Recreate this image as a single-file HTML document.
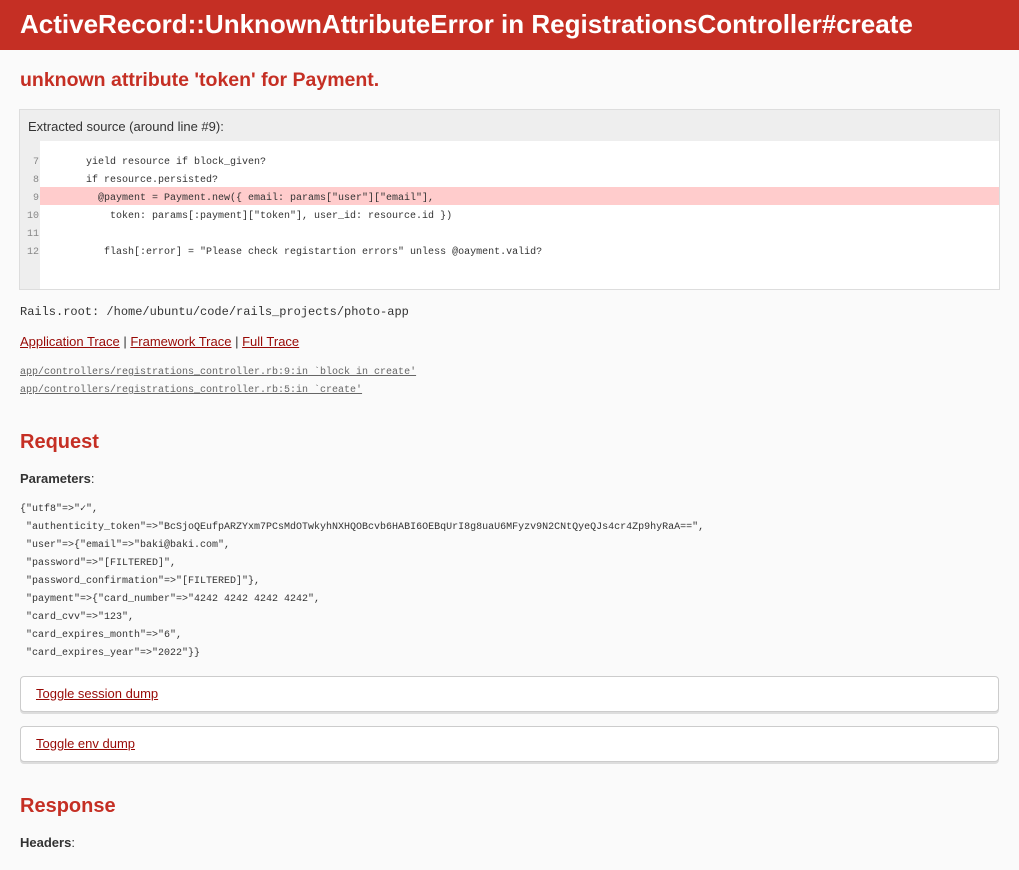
<!DOCTYPE html>
<html><head><meta charset="utf-8"><style>
body{margin:0;background:#fafafa;font-family:"Liberation Sans",Arial,sans-serif;color:#333;width:1019px;height:870px;overflow:hidden;position:relative}
.a{position:absolute;white-space:pre}
header{position:absolute;left:0;top:0;width:1019px;height:50px;background:#c52f24}
h1{position:absolute;left:20px;top:9px;margin:0;color:#fff;font-size:26px;font-weight:bold;white-space:nowrap}
.red{color:#c52f24;font-weight:bold}
.mono{font-family:"Liberation Mono",monospace;font-size:10px;color:#333}
a{color:#980905;text-decoration:underline}
.box{position:absolute;left:20px;width:977px;background:#fff;border:1px solid #ccc;border-radius:4px;box-shadow:0 2px 0 #ddd}
</style></head><body>
<header><h1>ActiveRecord::UnknownAttributeError in RegistrationsController#create</h1></header>
<div class="a red" style="left:20px;top:69px;font-size:19.5px">unknown attribute 'token' for Payment.</div>
<div style="position:absolute;left:19px;top:109px;width:979px;height:179px;border:1px solid #ddd;background:#eee">
 <div class="a" style="left:8px;top:9px;font-size:13px;color:#333">Extracted source (around line #9):</div>
 <div style="position:absolute;left:20px;top:31px;width:959px;height:148px;background:#fff"></div>
 <div style="position:absolute;left:20px;top:77px;width:959px;height:18px;background:#fcc"></div>
 <div class="a mono" style="left:0;top:44px;width:19px;text-align:right;line-height:18px;color:#888">7
8
9
10
11
12</div>
 <div class="a mono" style="left:30px;top:44px;line-height:18px">      yield resource if block_given?
      if resource.persisted?
        @payment = Payment.new({ email: params["user"]["email"],
          token: params[:payment]["token"], user_id: resource.id })

         flash[:error] = "Please check registartion errors" unless @oayment.valid?</div>
</div>
<div class="a mono" style="left:20px;top:305px;font-size:12px">Rails.root: /home/ubuntu/code/rails_projects/photo-app</div>
<div class="a" style="left:20px;top:334px;font-size:13px"><a>Application Trace</a> | <a>Framework Trace</a> | <a>Full Trace</a></div>
<div class="a mono" style="left:20px;top:364px;line-height:18px"><a style="color:#666">app/controllers/registrations_controller.rb:9:in `block in create'</a>
<a style="color:#666">app/controllers/registrations_controller.rb:5:in `create'</a></div>
<div class="a red" style="left:20px;top:431px;font-size:20px">Request</div>
<div class="a" style="left:20px;top:471px;font-size:13px"><b>Parameters</b>:</div>
<div class="a mono" style="left:20px;top:501px;line-height:18px">{"utf8"=>"✓",
 "authenticity_token"=>"BcSjoQEufpARZYxm7PCsMdOTwkyhNXHQOBcvb6HABI6OEBqUrI8g8uaU6MFyzv9N2CNtQyeQJs4cr4Zp9hyRaA==",
 "user"=>{"email"=>"baki@baki.com",
 "password"=>"[FILTERED]",
 "password_confirmation"=>"[FILTERED]"},
 "payment"=>{"card_number"=>"4242 4242 4242 4242",
 "card_cvv"=>"123",
 "card_expires_month"=>"6",
 "card_expires_year"=>"2022"}}</div>
<div class="box" style="top:676px;height:34px"><a class="a" style="left:15px;top:9px;font-size:13px">Toggle session dump</a></div>
<div class="box" style="top:726px;height:34px"><a class="a" style="left:15px;top:9px;font-size:13px">Toggle env dump</a></div>
<div class="a red" style="left:20px;top:795px;font-size:20px">Response</div>
<div class="a" style="left:20px;top:835px;font-size:13px"><b>Headers</b>:</div>
</body></html>
